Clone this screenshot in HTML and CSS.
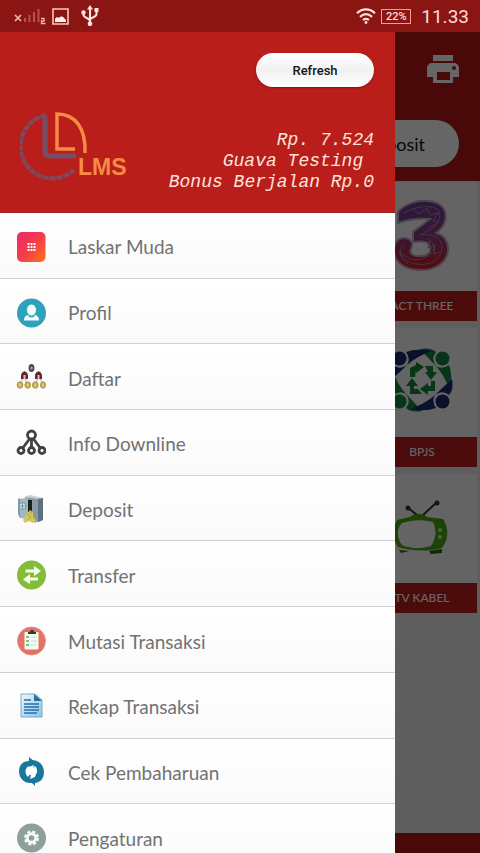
FILE: index.html
```html
<!DOCTYPE html>
<html lang="id">
<head>
<meta charset="utf-8">
<meta name="viewport" content="width=device-width, initial-scale=1">
<title>LMS</title>
<link rel="stylesheet" href="styles.css">
</head>
<body>
<div class="app">
  <header class="status">
    <div class="status-group">
      <svg class="signal" viewBox="0 0 32 18" aria-hidden="true">
        <path d="M1 8l6 6M7 8l-6 6" stroke="#f3b9ab" stroke-width="1.6"/>
        <path d="M11 15v-4M15.500 15v-7M20 15v-10M24.500 15v-13" stroke="#b5524c" stroke-width="2"/>
        <path d="M27 11.500h3v2.500h-2.500v2.500h4" fill="none" stroke="#f3b9ab" stroke-width="1.300"/>
      </svg>
      <svg class="picture" viewBox="0 0 17 17" aria-hidden="true">
        <path d="M1 1h15v15H1z" fill="none" stroke="#f7c9bd" stroke-width="1.600"/>
        <path d="M3 14v-3c1-2 3-2 4-1 1-2 4-2 5 0l2 2v2z" fill="#fff1ec"/>
      </svg>
      <svg class="usb" viewBox="0 0 18 22" aria-hidden="true">
        <g fill="none" stroke="#ffe6df" stroke-width="2"><path d="M9 3v16M2.500 8v2c0 3 6.500 3 6.500 6M15.500 5v4c0 4-6.500 3-6.500 6"/></g>
        <path d="M9 0l3 4.500H6zM13.500 3h4v4h-4z" fill="#ffe6df"/><circle cx="2.500" cy="7.500" r="2.200" fill="#ffe6df"/><circle cx="9" cy="18.800" r="2.400" fill="#ffe6df"/>
      </svg>
    </div>
    <div class="status-group">
      <svg class="wifi" viewBox="0 0 20 16" aria-hidden="true">
        <g fill="none" stroke="#ffe0d8" stroke-width="2.200"><path d="M1 5.200c5.500-5 12.500-5 18 0M4 8.800c3.700-3.200 8.300-3.200 12 0M7 12c2-1.600 4-1.600 6 0"/></g><circle cx="10" cy="14.500" r="1.400" fill="#ffe0d8"/>
      </svg>
      <span class="battery">22%</span>
      <time class="clock">11.33</time>
    </div>
  </header>

  <div class="stage">
    <main class="page">
      <div class="page-top">
        <svg class="printer" viewBox="0 0 32 28" aria-label="Printer" role="img">
          <path fill="#fff" fill-rule="evenodd" d="M6 0h20v6H6zM5 8h22a5 5 0 0 1 5 5v9h-6v6H6v-6H0v-9a5 5 0 0 1 5-5zm5 9v8h13v-8zM27 11a2 2 0 1 0 0 4 2 2 0 0 0 0-4z"/>
        </svg>
        <button class="pill deposit" type="button">posit</button>
      </div>
      <div class="cards">
        <a class="card" href="#">
          <span class="card-art"><svg viewBox="2 1 80 80" role="img" aria-label="Three">
            <defs><linearGradient id="three" x1="0" y1="0" x2="0" y2="1"><stop offset="0" stop-color="#65429a"/><stop offset=".5" stop-color="#8b3c80"/><stop offset="1" stop-color="#d51c20"/></linearGradient></defs>
            <path d="M18 16C25 8 37 4 48 5c14 1 20 10 17 20-1 5-5 9-9 12 8 2 13 9 12 18-2 13-15 20-30 19-15-1-24-9-24-20 0-7 4-12 10-12 7 0 10 5 7 11-2 5 3 8 10 7 7 0 10-4 9-9-1-6-8-6-17-5V36l17-13c-10-1-21 0-32 4z" fill="url(#three)" stroke="#c4a8c4" stroke-width="2"/>
            <path d="M23 17c12-6 25-9 34-4 5 5 3 14-5 20l-12 6c12-2 23 3 22 14-2 12-13 17-25 15-9-1-14-5-17-12 7 7 15 10 24 6 12-4 12-14 4-19M34 14l5 4 8-6 3 7 8-2-5 8 6 1-11 7M50 45l-2 7 7-3-1 9 6-2M24 49c-7 6-4 14 4 19" fill="none" stroke="#b27fae" stroke-width="1"/>
          </svg></span>
          <span class="card-label">ACT THREE</span>
        </a>
        <a class="card" href="#">
          <span class="card-art"><svg viewBox="2 4 80 80" role="img" aria-label="BPJS">
            <defs><g id="figure"><circle cx="62.500" cy="19.500" r="7"/><path d="M40 10Q51 8 56 13 50 20 57 28 49 20 40 10zM56 27Q62 31 69 26 73 36 70 52 65 37 56 27z"/></g></defs>
            <g fill="#12843a"><use href="#figure"/><use href="#figure" transform="rotate(180 41 41)"/></g>
            <g fill="#1c2c70"><use href="#figure" transform="rotate(90 41 41)"/><use href="#figure" transform="rotate(270 41 41)"/></g>
            <path d="M30 38v-9l6-3v-3l8 5-8 6v-3l-1 7zM45 27h8v6h4l-6 8-6-8h3zM55 42v10h-7v4l-8-6 8-6v3h3v-5zM42 55H30v-8h-4l6-8 6 8h-4v3h4z" fill="#12843a"/>
          </svg></span>
          <span class="card-label">BPJS</span>
        </a>
        <a class="card" href="#">
          <span class="card-art"><svg viewBox="1 0 80 80" role="img" aria-label="TV">
            <path d="M36 26L26 18M42 26L55 14" stroke="#333" stroke-width="2"/><circle cx="27" cy="19" r="2.500" fill="#333"/><circle cx="56" cy="14" r="2.500" fill="#333"/>
            <path fill="#46a50e" fill-rule="evenodd" d="M16 31l13-3c4-4 14-4 17 0l16 2c6 9 6 20-1 29-15 4-32 3-44-1-6-8-5-19-1-27zm5 3c-6 5-5 16 0 22 9 4 19 4 29 1 5-7 6-15 2-24-11-3-22-2-31 1z"/>
            <path d="M18 61l10 1-8 2zM48 62l13-2v4l-11 1z" fill="#266606"/><circle cx="59" cy="41" r="2" fill="#c6e6ae"/><circle cx="59" cy="48" r="2" fill="#c6e6ae"/>
          </svg></span>
          <span class="card-label">TV KABEL</span>
        </a>
      </div>
      <div class="page-foot"></div>
    </main>

    <div class="scrim"></div>

    <aside class="drawer">
      <div class="drawer-head">
        <button class="pill refresh" type="button">Refresh</button>
        <div class="account">
          <svg class="logo" viewBox="0 0 110 72" role="img" aria-label="LMS">
            <path d="M26 6A32 32 0 1 0 54 61" fill="none" stroke="#7b4c60" stroke-width="4" stroke-dasharray="6 1"/>
            <path d="M25 6v36q0 5 5 5h26" fill="none" stroke="#744d66" stroke-width="5"/>
            <path d="M55 40H37V5c19 0 29 15 28 39" fill="none" stroke="#f58b45" stroke-width="3.500"/>
            <text class="logo-text" x="58" y="66">LMS</text>
          </svg>
          <div class="balance">
            <div class="balance-line">Rp. 7.524</div>
            <div class="balance-line">Guava Testing </div>
            <div class="balance-line">Bonus Berjalan Rp.0</div>
          </div>
        </div>
      </div>
      <nav class="menu">
        <a class="item" href="#">
          <svg class="icon" viewBox="0 0 30 30" aria-hidden="true"><defs><linearGradient id="app" x1="0" y1="0" x2="1" y2="1"><stop offset="0" stop-color="#ef2770"/><stop offset=".5" stop-color="#f43c48"/><stop offset="1" stop-color="#fc7617"/></linearGradient></defs><rect x="1" width="28.500" height="30" rx="5" fill="url(#app)"/><path d="M11.500 12h8M11.500 15h8M11.500 18h8" stroke="#fff" stroke-width="2" stroke-dasharray="2 1"/></svg>
          <span>Laskar Muda</span></a>
        <a class="item" href="#">
          <svg class="icon" viewBox="0 0 30 30" aria-hidden="true"><circle cx="15.500" cy="15" r="14.500" fill="#2da2bd"/><path d="M8 22.500c0-4 2-5 5-6h5c3 1 5 2 5 6z" fill="#f4fcfd"/><ellipse cx="15.500" cy="12" rx="5" ry="6" fill="#f4fcfd" stroke="#2da2bd"/><path d="M12.500 17.500q3 3 6 0" fill="none" stroke="#2da2bd" stroke-width="1.200"/></svg>
          <span>Profil</span></a>
        <a class="item" href="#">
          <svg class="icon" viewBox="0 0 30 30" aria-hidden="true"><g fill="none" stroke="#d29a8a" stroke-width="1"><path d="M8.500 8v3M22.500 8v3M8 15l-5 6M8.500 15l3 6M22.500 15l-4 6M23 15l5 6"/></g><ellipse cx="15.500" cy="5" rx="3" ry="4" fill="#534b52"/><circle cx="15.500" cy="5" r="1.200" fill="#b4a8a9"/><path d="M5 16v-3c0-6 7-6 7 0v3zM19 16v-3c0-6 7-6 7 0v3z" fill="#562b2a"/><path d="M7.500 12h2v4h-2zM21.500 12h2v4h-2z" fill="#e5bab1"/><g fill="#c9ac58" stroke="#ad9145"><ellipse cx="4" cy="22" rx="2.800" ry="3.200"/><ellipse cx="11.700" cy="22" rx="2.800" ry="3.200"/><ellipse cx="19.300" cy="22" rx="2.800" ry="3.200"/><ellipse cx="27" cy="22" rx="2.500" ry="3.200"/></g><path d="M4 20.500v3M11.700 20.500v3M19.300 20.500v3M27 20.500v3" stroke="#f1e3a9"/></svg>
          <span>Daftar</span></a>
        <a class="item" href="#">
          <svg class="icon" viewBox="0 0 30 30" aria-hidden="true"><g fill="none" stroke="#414141" stroke-width="2.800"><path d="M13.500 10L6 20M15.500 10v10M17.500 10L25 20"/><g fill="#fff"><circle cx="15.500" cy="6" r="4"/><circle cx="5" cy="21.500" r="3"/><circle cx="15.500" cy="21.500" r="3"/><circle cx="26" cy="21.500" r="3"/></g></g></svg>
          <span>Info Downline</span></a>
        <a class="item" href="#">
          <svg class="icon" viewBox="0 0 30 30" aria-hidden="true"><path d="M9 2l18 1v22l-5 2-13-2z" fill="#8799a3"/><path d="M22 4l5-1v22l-5 2z" fill="#5d717c"/><path d="M8 2l6-2 13 3-6 1z" fill="#c2cfd3"/><path d="M11 5h5v20h-5z" fill="#17211e"/><path d="M2 4l10-1v21l-8-1-2-5z" fill="#a1b8c2"/><path d="M2 4l2-1v20l-2-4z" fill="#7f9ba8"/><circle cx="6.500" cy="11" r="3.500" fill="#d1e3e8" stroke="#7494a0"/><path d="M3.500 11h6M6.500 8v6" stroke="#7494a0"/><path d="M10 20l4-5 3 2v5l3 3-3 3-4-2-4 2-2-3z" fill="#d2c854"/><path d="M11 19l4 3-3 3M15 16v3M18 27h2" stroke="#a59b43" fill="none"/></svg>
          <span>Deposit</span></a>
        <a class="item" href="#">
          <svg class="icon" viewBox="0 0 30 30" aria-hidden="true"><circle cx="15.500" cy="15" r="14.500" fill="#83bd37"/><path d="M9.500 9.500H18V6l7 5-7 5v-3.500H9.500zM22 17.500h-8V14l-7 5.500 7 4.500v-3.500h8z" fill="#f8fff0"/></svg>
          <span>Transfer</span></a>
        <a class="item" href="#">
          <svg class="icon" viewBox="0 0 30 30" aria-hidden="true"><circle cx="15.500" cy="15" r="14" fill="#e27264" stroke="#eb9184"/><rect x="8.500" y="6" width="14" height="17.500" rx="1" fill="#f0fcf2"/><path d="M12 8V6h2c0-3 4-3 4 0h2v2z" fill="#34363c"/><path d="M10 11h3M10 15h3M10 19h3" stroke="#5aab65" stroke-width="1.500"/><path d="M15 11h6M15 15h6M15 19h5" stroke="#c7dcd1"/></svg>
          <span>Mutasi Transaksi</span></a>
        <a class="item" href="#">
          <svg class="icon" viewBox="0 0 30 30" aria-hidden="true"><defs><linearGradient id="doc" x1="0" y1="0" x2="1" y2="1"><stop offset="0" stop-color="#edf7fd"/><stop offset="1" stop-color="#8fc1e4"/></linearGradient></defs><path d="M5 2h14l7 6v17H5z" fill="url(#doc)" stroke="#79a9cc" stroke-width="1"/><path d="M18 2l8 7h-8z" fill="#286d9d"/><path d="M8 8h7M8 12h15M8 15h15M8 18h15M8 21h13" stroke="#2670ac" stroke-width="1.600"/></svg>
          <span>Rekap Transaksi</span></a>
        <a class="item" href="#">
          <svg class="icon" viewBox="0 0 30 30" aria-hidden="true"><path d="M13 0l8 7-6 6-2-4c-4 2-5 7-1 11l5 6C8 27 3 21 3 14 3 8 7 4 13 4z" fill="#17789c"/><path d="M19 29l-8-8 5-6 2 4c4-2 4-7 1-10l-4-6c8 0 13 5 13 12 0 6-3 10-9 11z" fill="#17789c"/><path d="M13 10l5-2-1 4 4 1-2 7-5 2 1-4-4-1z" fill="#fff"/></svg>
          <span>Cek Pembaharuan</span></a>
        <a class="item" href="#">
          <svg class="icon" viewBox="0 0 30 30" aria-hidden="true"><circle cx="15.500" cy="15" r="14.500" fill="#8f9f9b"/><circle cx="15.500" cy="15" r="5.700" fill="#f7faf8"/><circle cx="15.500" cy="15" r="6.300" fill="none" stroke="#f7faf8" stroke-width="2.400" stroke-dasharray="3 1.950"/><circle cx="15.500" cy="15" r="2.800" fill="#8f9f9b"/></svg>
          <span>Pengaturan</span></a>
      </nav>
    </aside>
  </div>
</div>
</body>
</html>
```
FILE: styles.css
```css
* { box-sizing: border-box; }

body {
  margin: 0;
  font-family: Lato, "Liberation Sans", sans-serif;
}

a { color: inherit; text-decoration: none; }

.app {
  display: flex;
  flex-direction: column;
  height: 100vh;
  overflow: hidden;
}

.status {
  display: flex;
  flex: none;
  align-items: center;
  justify-content: space-between;
  height: 32px;
  padding: 0 11px 0 14px;
  background: #8b1513;
  color: #ffdcd4;
  font-family: Roboto, sans-serif;
}

.status-group { display: flex; align-items: center; }
.signal { width: 32px; height: 18px; }
.picture { width: 17px; height: 17px; margin-left: 6px; }
.usb { width: 18px; height: 22px; margin-left: 12px; }
.wifi { width: 20px; height: 16px; }

.battery {
  width: 30px;
  margin: 0 10px 0 5px;
  border: 1px solid #f0a093;
  font-size: 11px;
  font-weight: 500;
  line-height: 13px;
  text-align: center;
}

.clock { font-size: 19px; }

.stage {
  position: relative;
  flex: 1;
  min-height: 0;
  overflow: hidden;
}

.page {
  display: flex;
  flex-direction: column;
  height: 100%;
  background: #ececec;
}

.page-top {
  display: flex;
  flex-direction: column;
  align-items: flex-end;
  gap: 37px;
  padding: 23px 21px 14px;
  background: #b41715;
}

.printer { width: 32px; height: 28px; }

.pill {
  flex: none;
  border: 0;
  border-radius: 24px;
  background: #fff;
  color: #161616;
  font-family: inherit;
}

.deposit {
  width: 128px;
  height: 47px;
  padding: 0 34px 0 0;
  font-size: 18px;
  text-align: right;
}

.cards {
  display: flex;
  flex: 1;
  flex-direction: column;
  align-items: flex-end;
  gap: 7px;
  padding: 1px 3px;
}

.card {
  display: flex;
  flex-direction: column;
  width: 110px;
  background: #fafafa;
}

.card-art { display: grid; place-items: center; height: 109px; }
.card-art svg { width: 80px; height: 80px; }

.card-label {
  background: #bf1c1c;
  color: #fff;
  font-size: 12px;
  font-weight: 500;
  line-height: 30px;
  text-align: center;
  white-space: nowrap;
}

.page-foot { height: 20px; background: #b41a15; }

.scrim {
  position: absolute;
  inset: 0;
  background: rgba(0, 0, 0, 0.6);
}

.drawer {
  position: absolute;
  inset: 0 85px 0 0;
  overflow: hidden;
  background: #fdfdfd;
}

.drawer-head {
  display: flex;
  flex-direction: column;
  align-items: flex-end;
  gap: 22px;
  height: 181px;
  padding: 21px 21px 0 20px;
  border-bottom: 1px solid #9d2420;
  background: #ba1e1a;
}

.refresh {
  width: 118px;
  height: 34px;
  background: linear-gradient(#fff, #f1f1f1 50%, #fff);
  box-shadow: 0 1px 2px #7f1512;
  font: 500 13px Roboto, sans-serif;
}

.account {
  display: flex;
  align-self: stretch;
  justify-content: space-between;
}

.logo { width: 110px; height: 72px; }

.logo-text {
  fill: #f58b45;
  font: bold 23px "Liberation Sans", sans-serif;
}

.balance {
  padding-top: 21px;
  color: #ffe3da;
  font: italic 18px/21px "Liberation Mono", monospace;
  text-align: right;
}

.balance-line { white-space: pre; }

.menu {
  display: grid;
  grid-template-rows: repeat(10, 1fr);
  height: 657px;
}

.item {
  display: flex;
  align-items: center;
  gap: 22px;
  padding: 3px 16px 0;
  border-bottom: 1px solid #d0d0d0;
  background: linear-gradient(#fff, #fafafa);
  color: #727272;
  font-size: 19px;
}

.icon { flex: none; width: 30px; height: 30px; }
```
